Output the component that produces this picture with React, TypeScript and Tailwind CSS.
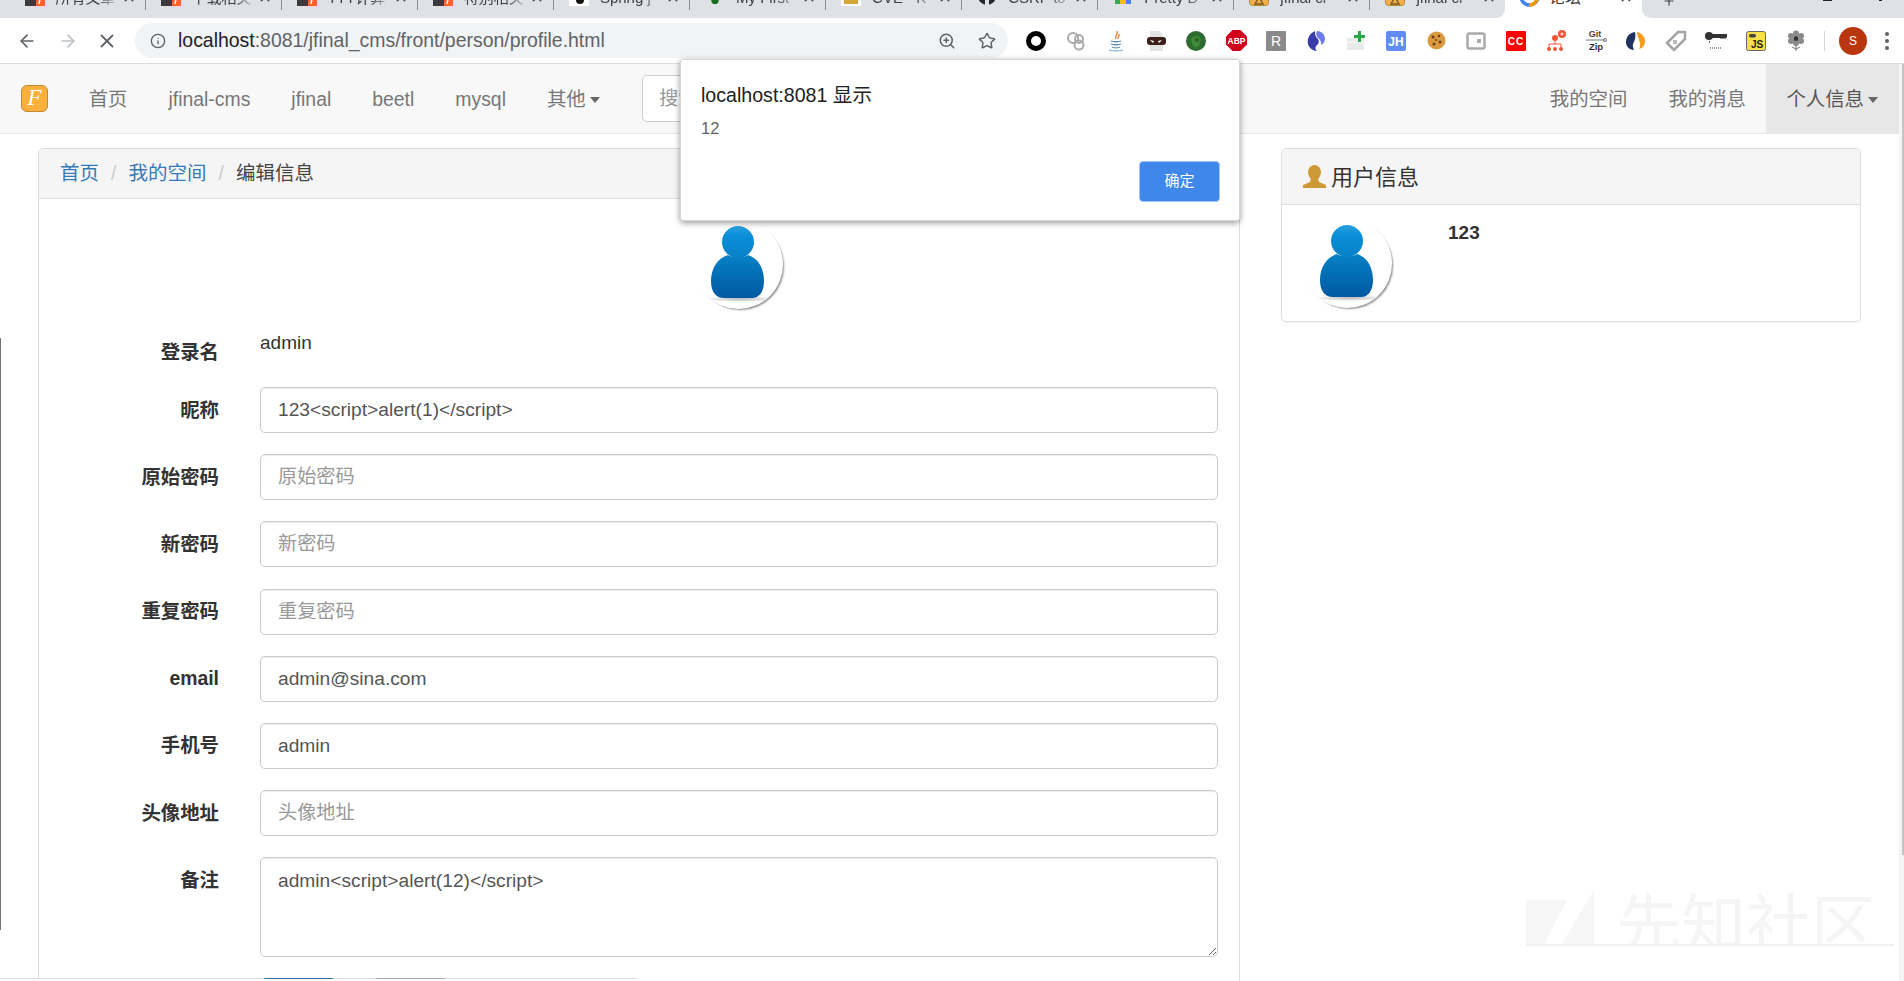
import React from "react";
import { ArrowLeft, ArrowRight, X, Info, ZoomIn, Star, Plus } from "lucide-react";

const Book = () => (
  <svg width="20" height="20" viewBox="0 0 20 20">
    <rect x="0" y="0" width="11" height="20" fill="#3a3a3a" />
    <rect x="11" y="0" width="9" height="20" fill="#f4652a" />
    <path d="M14 18l1-5h2" stroke="#fff" strokeWidth="1.4" fill="none" />
  </svg>
);
const JF = () => (
  <svg width="20" height="20" viewBox="0 0 20 20">
    <rect x="0.5" y="0.5" width="19" height="19" rx="3" fill="#f4b048" stroke="#b98635" />
    <path d="M10 11l-4 7h8z" fill="none" stroke="#7a5a20" strokeWidth="1.4" />
  </svg>
);

const tabs: [string, React.ReactNode][] = [
  ["所有文章", <Book />],
  ["下载相关", <Book />],
  ["TTT计算", <Book />],
  ["特别相关", <Book />],
  ["Spring j", <svg width="20" height="20" viewBox="0 0 20 20"><rect width="20" height="20" fill="#fff" /><circle cx="11" cy="14" r="4" fill="#111" /></svg>],
  ["My First", <svg width="20" height="20" viewBox="0 0 20 20"><path d="M10 9l4 6-2 3H8l-2-3z" fill="#1b6e1b" /></svg>],
  ["CVE - K", <svg width="20" height="20" viewBox="0 0 20 20"><rect width="20" height="20" fill="#fff" /><rect x="3" y="12" width="14" height="6" fill="#d6a63a" /></svg>],
  ["CSRF to", <svg width="20" height="20" viewBox="0 0 20 20"><circle cx="10" cy="10" r="9" fill="#24292e" /><rect x="8" y="14" width="4" height="6" fill="#dee1e6" /></svg>],
  ["Pretty D", <svg width="20" height="20" viewBox="0 0 20 20"><rect x="2" y="13" width="5" height="5" fill="#34a853" /><rect x="7" y="13" width="6" height="5" fill="#fbbc05" /><rect x="13" y="13" width="5" height="5" fill="#4285f4" /></svg>],
  ["jfinal cr", <JF />],
  ["jfinal cr", <JF />],
];

const Tab = ({ title, icon, last }: { title: string; icon: React.ReactNode; last: boolean }) => (
  <div className="relative w-[136.1px] h-[18px] shrink-0">
    <div className="flex items-center h-[36px] -mt-[22px] pl-[15px]">
      <div className="w-5 h-5 shrink-0">{icon}</div>
      <div className="ml-[11px] w-[64px] overflow-hidden whitespace-nowrap text-[15px] leading-[20px] translate-y-[2px] text-[#3c4043] [mask-image:linear-gradient(to_right,black_65%,transparent)]">{title}</div>
      <X size={14} strokeWidth={3} className="ml-[2px] translate-y-[1px] text-[#444]" />
    </div>
    {!last && <div className="absolute right-0 top-0 w-px h-[10px] bg-[#8a8d91]" />}
  </div>
);

const Ext = ({ children }: { children: React.ReactNode }) => (
  <div className="w-10 h-10 flex items-center justify-center shrink-0">{children}</div>
);

const exts: React.ReactNode[] = [
  <svg width="20" height="20" viewBox="0 0 20 20"><circle cx="10" cy="10" r="7.5" fill="none" stroke="#000" strokeWidth="5" /></svg>,
  <svg width="20" height="20" viewBox="0 0 20 20"><g fill="none" stroke="#aaa" strokeWidth="2"><circle cx="7" cy="7" r="5" /><circle cx="13" cy="8" r="4" /><circle cx="13" cy="14" r="4.5" /></g></svg>,
  <svg width="20" height="22" viewBox="0 0 20 22"><path d="M11 1c2 3-3 4-1 8M13 4c1 2-2 3-1 5" fill="none" stroke="#e7762b" strokeWidth="1.3" /><path d="M5 11c2 1 8 1 10 0M5 14c2 1 8 1 10 0M6 17c2 1 6 1 8 0" fill="none" stroke="#5d87a8" strokeWidth="1.3" /><path d="M3 20c4 1 10 1 14 0" fill="none" stroke="#7fb0d0" strokeWidth="1.2" /></svg>,
  <svg width="20" height="22" viewBox="0 0 20 22"><path d="M4 1h9l4 4v16H4z" fill="#e4e4e4" /><rect x="1" y="7" width="19" height="8" rx="3" fill="#3d1f1a" /><path d="M4 10l4 1-1 2zM16 10l-4 1 1 2z" fill="#fff" /></svg>,
  <svg width="20" height="20" viewBox="0 0 20 20"><circle cx="10" cy="10" r="10" fill="#2e6b2e" /><path d="M5 8c3-4 8-4 10 0l-2 7-4 2-3-4z" fill="#3f8a35" /><circle cx="11" cy="9" r="2" fill="#2a5f2a" /></svg>,
  <svg width="21" height="21" viewBox="0 0 21 21"><path d="M6.5 0h8L21 6.500v8L14.500 21h-8L0 14.500v-8z" fill="#d0021b" /><text x="10.500" y="14" fontSize="8.500" fontWeight="700" fill="#fff" textAnchor="middle" fontFamily="Liberation Sans">ABP</text></svg>,
  <svg width="20" height="20" viewBox="0 0 20 20"><rect width="20" height="20" rx="1" fill="#8a8a8a" /><text x="10" y="15" fontSize="14" fill="#fff" textAnchor="middle" fontFamily="Liberation Sans">R</text></svg>,
  <svg width="20" height="22" viewBox="0 0 20 22"><path d="M9 1C3 4 1 9 2 14c1 4 5 7 9 7-3-3-1-5 1-7 2-3 0-5-2-7-1-2-1-4-1-6z" fill="#3b3ba8" /><path d="M11 1c4 0 8 3 8 8 0 3-2 5-4 6 1-4-2-6-4-8-1-2-1-4 0-6z" fill="#6f7cf0" /></svg>,
  <svg width="20" height="20" viewBox="0 0 20 20"><path d="M1 7h17v12H1z" fill="#e9eaea" /><path d="M1 11h17" stroke="#fff" /><path d="M12 0h3v4h4v3h-4v4h-3V7H8V4h4z" fill="#28a745" /></svg>,
  <svg width="20" height="20" viewBox="0 0 20 20"><rect width="20" height="20" rx="2" fill="#5f8cf5" /><text x="10" y="15" fontSize="12" fontWeight="700" fill="#fff" textAnchor="middle" fontFamily="Liberation Sans">JH</text></svg>,
  <svg width="19" height="19" viewBox="0 0 19 19"><circle cx="9.500" cy="9.500" r="9" fill="#d99a3f" /><g fill="#6b3e12"><circle cx="6" cy="6" r="1.500" /><circle cx="12" cy="5" r="1.200" /><circle cx="13" cy="11" r="1.500" /><circle cx="7" cy="13" r="1.500" /><circle cx="9" cy="9" r="1" /></g></svg>,
  <svg width="20" height="18" viewBox="0 0 20 18"><rect x="1.500" y="1.500" width="17" height="15" rx="2" fill="none" stroke="#aaa" strokeWidth="2.500" /><rect x="11" y="7" width="4" height="4" fill="#aaa" /></svg>,
  <svg width="20" height="20" viewBox="0 0 20 20"><rect width="20" height="20" rx="1" fill="#f00" /><text x="10" y="14" fontSize="10" fontWeight="700" fill="#fff" textAnchor="middle" fontFamily="Liberation Sans" letterSpacing="1">CC</text></svg>,
  <svg width="20" height="22" viewBox="0 0 20 22"><circle cx="16" cy="4" r="4" fill="#f0563a" /><path d="M14.500 4h3M16 2.500v3" stroke="#fff" /><circle cx="9" cy="8" r="3" fill="#f0563a" /><path d="M9 10v4M3 18v-4h12v4" fill="none" stroke="#f0563a" /><circle cx="3" cy="19" r="2" fill="#f0563a" /><circle cx="9" cy="19" r="2" fill="#f0563a" /><circle cx="15" cy="19" r="2" fill="#f0563a" /></svg>,
  <svg width="24" height="24" viewBox="0 0 24 24"><text x="11" y="8" fontSize="9" fontWeight="700" fill="#444" textAnchor="middle" fontFamily="Liberation Sans">Git</text><path d="M2 11h19" stroke="#777" /><circle cx="21" cy="11" r="1.500" fill="none" stroke="#777" /><text x="12" y="21" fontSize="9.500" fontWeight="700" fill="#333" textAnchor="middle" fontFamily="Liberation Sans">Zip</text></svg>,
  <svg width="20" height="20" viewBox="0 0 20 20"><path d="M9 1C3 2 0 6 0 11c0 4 3 8 8 8-1-3-2-5 0-8 1-3 2-6 1-10z" fill="#1f3260" /><path d="M11 1c5 1 8 5 8 9 0 4-2 7-6 8 2-3 1-6 0-9-1-3-2-6-2-8z" fill="#f79c1d" /></svg>,
  <svg width="22" height="22" viewBox="0 0 22 22"><path d="M13 2h7v7L9 20 2 13z" fill="none" stroke="#a3a3a3" strokeWidth="2.500" /><rect x="8" y="10" width="4" height="4" fill="#bbb" /></svg>,
  <svg width="24" height="22" viewBox="0 0 24 22"><circle cx="5" cy="6" r="4" fill="#333" /><path d="M5 4h18v3l-2 2-1-1-1 1-1-1-1 1-1-1H5z" fill="#333" /><path d="M5 11h1v2H5z" fill="#666" /><path d="M6 18h11" stroke="#999" strokeWidth="2" strokeDasharray="1 1" /></svg>,
  <svg width="20" height="20" viewBox="0 0 20 20"><rect x="0.500" y="0.500" width="19" height="19" rx="2" fill="#f7df4e" stroke="#666" /><rect x="3" y="3" width="7" height="3.500" rx="1.700" fill="#444" /><text x="11" y="17" fontSize="10" fontWeight="700" fill="#222" textAnchor="middle" fontFamily="Liberation Sans">JS</text></svg>,
  <svg width="18" height="22" viewBox="0 0 18 22"><g fill="#8a8a8a"><circle cx="9" cy="3.500" r="3" /><circle cx="9" cy="13" r="3" /><circle cx="4" cy="6" r="3" /><circle cx="14" cy="6" r="3" /><circle cx="4" cy="11" r="3" /><circle cx="14" cy="11" r="3" /></g><circle cx="9" cy="8.500" r="2.500" fill="#333" /><path d="M9 15v6M9 19l-4-2M9 19l4-2" stroke="#777" fill="none" /></svg>,
];

const Avatar = () => (
  <div className="w-[89px] h-[89px] rounded-full bg-white shadow-[2px_2px_2px_-1px_rgba(0,0,0,0.45)] overflow-hidden shrink-0">
    <svg width="89" height="89" viewBox="0 0 89 89">
      <defs>
        <linearGradient id="ah" x1="0" y1="0" x2="0" y2="1"><stop offset="0" stopColor="#2ba0de" /><stop offset="0.3" stopColor="#0a8fd9" /><stop offset="1" stopColor="#0781c6" /></linearGradient>
        <linearGradient id="ab" x1="0" y1="0" x2="0" y2="1"><stop offset="0" stopColor="#0681c6" /><stop offset="1" stopColor="#0059a1" /></linearGradient>
        <radialGradient id="as"><stop offset="0" stopColor="#b5b5b5" /><stop offset="1" stopColor="#ffffff" /></radialGradient>
      </defs>
      <ellipse cx="46" cy="79" rx="36" ry="3" fill="url(#as)" />
      <ellipse cx="44" cy="22" rx="16" ry="16" fill="url(#ah)" />
      <path d="M34 35c3 3 17 3 20 0 10 3 16 13 16 26 0 11-5 17-12 17H30c-8 0-13-6-13-17 0-13 7-23 17-26z" fill="url(#ab)" />
    </svg>
  </div>
);

const rowInput = "flex-1 min-w-0 h-[46px] border border-[#ccc] rounded-[5px] px-[17px] text-[19.200px] text-[#555] bg-white shadow-[inset_0_1px_1px_rgba(0,0,0,0.075)] outline-none placeholder:text-[#999]";

const Row = ({ label, value, placeholder }: { label: string; value?: string; placeholder?: string }) => (
  <div className="flex mb-[21.2px] pr-[21px]">
    <label className="w-[180px] text-right font-bold text-[19.400px] text-[#333] pt-[9.500px] leading-[27px]">{label}</label>
    <input readOnly className={`ml-[41px] ${rowInput}`} value={value ?? ""} placeholder={placeholder} />
  </div>
);

const Caret = () => (
  <span className="inline-block ml-[4px] align-middle w-0 h-0 border-t-[6px] border-t-[#666] border-x-[5px] border-x-transparent" />
);

const NavLink = ({ children, className = "" }: { children: React.ReactNode; className?: string }) => (
  <a className={`pt-[3px] px-[20.500px] h-full flex items-center text-[19.400px] text-[#777] whitespace-nowrap ${className}`}>{children}</a>
);

export default function App() {
  return (
    <div className="relative w-[1904px] h-[981px] overflow-hidden bg-white flex flex-col [font-family:'Liberation_Sans','Noto_Sans_CJK_SC',sans-serif]">
      {/* tab strip */}
      <div className="flex h-[18px] bg-white shrink-0 overflow-hidden">
        <div className="flex w-[1505px] h-[18px] pl-[9.500px] bg-[#dee1e6] rounded-br-[9px] shrink-0 overflow-hidden">
          {tabs.map(([t, i], n) => (
            <Tab key={n} title={t} icon={i} last={n === tabs.length - 1} />
          ))}
        </div>
        <div className="w-[137px] h-[18px] shrink-0 relative overflow-hidden">
          <div className="flex items-center h-[36px] -mt-[22px] pl-[14px]">
            <svg width="21" height="21" viewBox="0 0 21 21"><circle cx="10.500" cy="10.500" r="8.500" fill="none" stroke="#4285f4" strokeWidth="3.500" /><path d="M10 19a8.500 8.500 0 0 0 8-6" fill="none" stroke="#f29900" strokeWidth="3.500" /></svg>
            <span className="ml-[9px] text-[16px] leading-[20px] translate-y-[2px] text-[#3c4043] whitespace-nowrap">论坛</span>
            <X size={14} strokeWidth={3} className="ml-[38px] translate-y-[1px] text-[#444]" />
          </div>
        </div>
        <div className="flex-1 h-[18px] bg-[#dee1e6] rounded-bl-[9px] relative overflow-hidden">
          <div className="flex items-start h-[18px] pl-[20px] -mt-[6px]">
            <Plus size={14} className="text-[#444]" />
            <div className="ml-[147px] mt-[6px] w-[9px] h-px bg-[#222]" />
            <div className="ml-[47px] mt-[6px] w-[3px] h-px bg-[#222]" />
          </div>
        </div>
      </div>

      {/* toolbar */}
      <div className="flex items-center h-[45px] bg-white border-b-0 shrink-0 pl-[17px] pr-[2px]">
        <ArrowLeft size={20} strokeWidth={2} className="text-[#5f6368]" />
        <ArrowRight size={20} strokeWidth={2} className="ml-[21px] text-[#bdc1c6]" />
        <X size={22} strokeWidth={2} className="ml-[18px] text-[#5f6368]" />
        <div className="ml-[17px] w-[873px] h-[35px] rounded-full bg-[#f1f3f4] flex items-center pl-[15px] pr-[12px]">
          <Info size={16} strokeWidth={2} className="text-[#5f6368]" />
          <span className="ml-[12px] text-[19.450px] text-[#202124]">localhost<span className="text-[#5f6368]">:8081/jfinal_cms/front/person/profile.html</span></span>
          <ZoomIn size={18} strokeWidth={2} className="ml-auto text-[#5f6368]" />
          <Star size={18} strokeWidth={2} className="ml-[22px] text-[#5f6368]" />
        </div>
        <div className="flex ml-[8px] items-center">
          {exts.map((e, i) => (
            <Ext key={i}>{e}</Ext>
          ))}
        </div>
        <div className="ml-[8px] w-px h-[20px] bg-[#d8d8d8]" />
        <div className="ml-[14px] w-[28px] h-[28px] rounded-full bg-[#b9360f] flex items-center justify-center text-white text-[12px]">S</div>
        <div className="ml-[18px] flex flex-col gap-[3px]">
          <span className="w-[4px] h-[4px] rounded-full bg-[#5f6368]" />
          <span className="w-[4px] h-[4px] rounded-full bg-[#5f6368]" />
          <span className="w-[4px] h-[4px] rounded-full bg-[#5f6368]" />
        </div>
      </div>
      <div className="h-px bg-[#dadce0] shrink-0" />

      {/* page */}
      <div className="flex flex-1 min-h-0">
        <div className="flex-1 min-w-0 flex flex-col">
          {/* navbar */}
          <div className="flex items-stretch h-[70px] bg-[#f8f8f8] border-b border-[#e7e7e7] shrink-0">
            <div className="pl-[21px] pr-[20.200px] flex items-center">
              <div className="w-[27px] h-[27px] rounded-[6px] bg-[#fbb03b] border border-[#c08a34] flex items-center justify-center text-white italic text-[23px] [font-family:'Liberation_Serif',serif]">F</div>
            </div>
            <NavLink>首页</NavLink>
            <NavLink>jfinal-cms</NavLink>
            <NavLink>jfinal</NavLink>
            <NavLink>beetl</NavLink>
            <NavLink>mysql</NavLink>
            <NavLink>其他<Caret /></NavLink>
            <div className="ml-[22px] flex items-center">
              <input readOnly placeholder="搜索" className="w-[300px] h-[47px] border border-[#ccc] rounded-[5px] px-[16px] text-[19px] bg-white outline-none placeholder:text-[#999]" />
            </div>
            <div className="ml-auto flex items-stretch">
              <NavLink className="!pr-[20.500px]">我的空间</NavLink>
              <NavLink className="!pr-[20px]">我的消息</NavLink>
              <NavLink className="bg-[#e7e7e7] !text-[#555] !pr-[21px]">个人信息<Caret /></NavLink>
            </div>
          </div>

          {/* content */}
          <div className="flex items-start pl-[38px] pt-[14px] flex-1 min-h-0">
            <div className="w-[1202px] shrink-0 border border-[#ddd] rounded-t-[5px]">
              <div className="h-[50px] bg-[#f5f5f5] border-b border-[#ddd] flex items-center pl-[21px] pt-[1px] text-[19.500px] rounded-t-[5px]">
                <a className="text-[#337ab7]">首页</a>
                <span className="mx-[12px] text-[#ccc]">/</span>
                <a className="text-[#337ab7]">我的空间</a>
                <span className="mx-[12px] text-[#ccc]">/</span>
                <span className="text-[#444]">编辑信息</span>
              </div>
              <div className="pt-[21px]">
                <div className="ml-[655px]"><Avatar /></div>
                <div className="flex h-[78px]">
                  <label className="w-[180px] text-right font-bold text-[19.400px] text-[#333] pt-[30px] leading-[27px]">登录名</label>
                  <div className="ml-[41px] text-[19px] text-[#333] pt-[20px] leading-[27px]">admin</div>
                </div>
                <Row label="昵称" value="123<script>alert(1)</script>" />
                <Row label="原始密码" placeholder="原始密码" />
                <Row label="新密码" placeholder="新密码" />
                <Row label="重复密码" placeholder="重复密码" />
                <Row label="email" value="admin@sina.com" />
                <Row label="手机号" value="admin" />
                <Row label="头像地址" placeholder="头像地址" />
                <div className="flex mb-[21px] pr-[21px]">
                  <label className="w-[180px] text-right font-bold text-[19.400px] text-[#333] pt-[9.500px] leading-[27px]">备注</label>
                  <textarea readOnly className={`ml-[41px] !h-[100px] ${rowInput} !pt-[9px] leading-[27px]`} value="admin<script>alert(12)</script>" />
                </div>
                <div className="flex pl-[222px] gap-[37px] relative z-10">
                  <div className="w-[75px] h-[46px] bg-[#2a6ea8] border border-[#2e6da4] rounded-[5px]" />
                  <div className="w-[75px] h-[46px] bg-[#a8a8a8] border border-[#a8a8a8] rounded-[5px]" />
                </div>
              </div>
            </div>

            <div className="ml-[41px] w-[580px] h-[174px] shrink-0 border border-[#ddd] rounded-[5px] shadow-[0_1px_1px_rgba(0,0,0,0.05)]">
              <div className="h-[56px] bg-[#f5f5f5] border-b border-[#ddd] rounded-t-[5px] flex items-center pl-[21px]">
                <svg width="23" height="24" viewBox="0 0 23 24"><ellipse cx="11.500" cy="7.500" rx="6.500" ry="7.500" fill="#cf9a35" /><path d="M8 13h7l1 4 7 3v3H0v-3l7-3z" fill="#cf9a35" /></svg>
                <span className="ml-[5px] pt-[2px] text-[22px] text-[#333]">用户信息</span>
              </div>
              <div className="flex pt-[14px] pl-[21px]">
                <Avatar />
                <div className="ml-[56px] font-bold text-[19px] text-[#333] leading-[27px]">123</div>
              </div>
            </div>
          </div>
        </div>

        {/* page scrollbar */}
        <div className="w-[5px] shrink-0 bg-[#f5f5f5] flex justify-end items-start">
          <div className="w-[2px] h-[791px] bg-[#c4c4c4]" />
        </div>
      </div>

      {/* left window edge */}
      <div className="absolute left-0 top-[338px] w-px h-[592px] bg-[#777]" />

      {/* watermark */}
      <div className="absolute left-[1526px] top-[890px] w-[368px] h-[54px] overflow-hidden flex items-start gap-[22px] pointer-events-none">
        <svg width="68" height="54" viewBox="0 0 68 54" className="shrink-0"><path d="M0 10h41L18 54H0zM68 0v54H36z" fill="#f6f6f6" /></svg>
        <span className="mt-[3px] text-[65px] leading-[65px] text-[#f5f5f5] whitespace-nowrap">先知社区</span>
      </div>
      <div className="absolute left-[1526px] top-[944px] w-[368px] h-[2px] bg-[#f0f0f5]" />

      {/* status bubble */}
      <div className="absolute left-0 top-[978px] w-[637px] h-px bg-[#ddd]" />
      <div className="absolute left-0 top-[979px] w-[637px] h-[2px] bg-white z-20" />

      {/* alert dialog */}
      <div className="absolute z-30 left-[680px] top-[59px] w-[560px] h-[162px] bg-white rounded-[3px] border border-[#d6d6d6] shadow-[0_2px_6px_rgba(0,0,0,0.4)] px-[20px] pt-[23px]">
        <div className="text-[19.600px] leading-[24px] text-[#202124]">localhost:8081 显示</div>
        <div className="mt-[11px] text-[16.500px] leading-[20px] text-[#5f6368]">12</div>
        <div className="flex justify-end mt-[23px] -mr-[1px]">
          <button className="w-[81px] h-[41px] rounded-[4px] bg-[#3f87ea] border border-[#a3c4f3] text-white text-[15px]">确定</button>
        </div>
      </div>
    </div>
  );
}
